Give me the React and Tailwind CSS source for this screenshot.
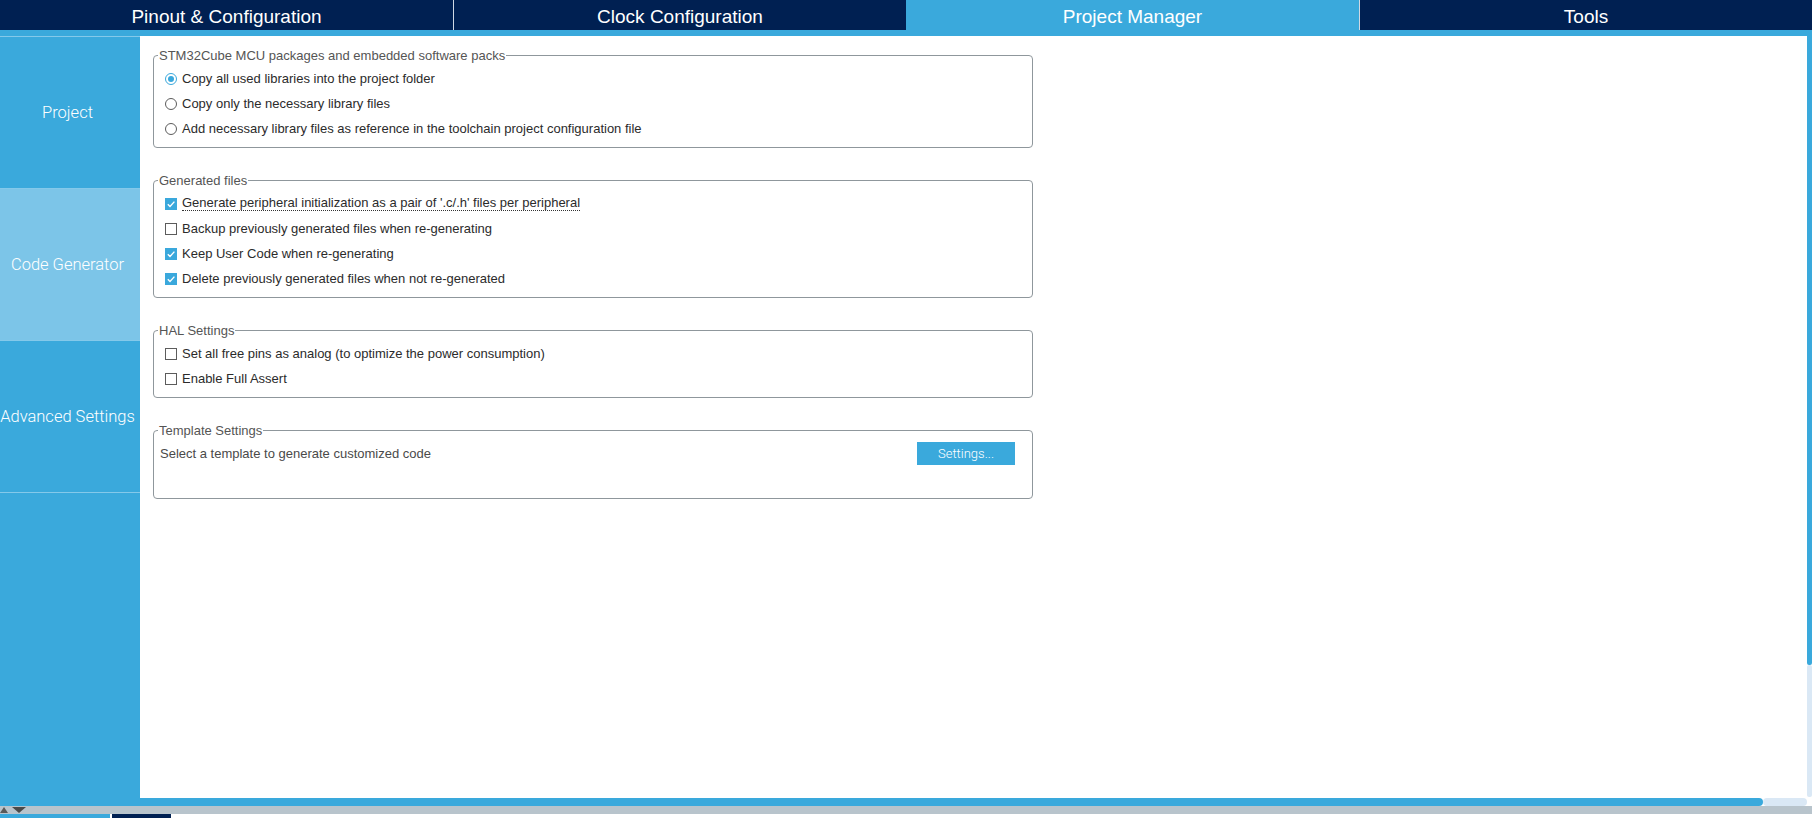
import React from 'react';

// 상단 탭 목록
const tabs = [
  { label: 'Pinout & Configuration', active: false },
  { label: 'Clock Configuration', active: false },
  { label: 'Project Manager', active: true },
  { label: 'Tools', active: false },
];

// 왼쪽 사이드 메뉴
const sideItems = [
  { label: 'Project', active: false },
  { label: 'Code Generator', active: true },
  { label: 'Advanced Settings', active: false },
];

function Radio({ checked }) {
  return (
    <span
      className={`flex h-[12px] w-[12px] shrink-0 items-center justify-center rounded-full border bg-white ${
        checked ? 'border-[#3aa8dc]' : 'border-[#5c5c5c]'
      }`}
    >
      {checked && <span className="h-[6px] w-[6px] rounded-full bg-[#3aa8dc]" />}
    </span>
  );
}

function Checkbox({ checked }) {
  if (checked) {
    return (
      <span className="flex h-[12px] w-[12px] shrink-0 items-center justify-center bg-[#3aa8dc]">
        <svg width="10" height="10" viewBox="0 0 10 10">
          <polyline
            points="1.8,5.2 4,7.4 8.4,2.6"
            fill="none"
            stroke="#fff"
            strokeWidth="1.4"
          />
        </svg>
      </span>
    );
  }
  return <span className="h-[12px] w-[12px] shrink-0 border border-[#5c5c5c] bg-white" />;
}

// 옵션 한 줄 (라디오 / 체크박스)
function OptionRow({ type, checked, focused, children }) {
  return (
    <div className="flex h-[25px] items-center gap-[5px] pl-[11px]">
      {type === 'radio' ? <Radio checked={checked} /> : <Checkbox checked={checked} />}
      <span
        className={`text-[13px] leading-[14px] text-[#2b2b2b] ${
          focused ? 'border-b border-dotted border-[#333]' : ''
        }`}
      >
        {children}
      </span>
    </div>
  );
}

// 그룹 박스
function Group({ title, className = '', children }) {
  return (
    <fieldset
      className={`w-[880px] rounded-[4px] border border-[#8f979c] px-0 pt-[3px] pb-[6px] ${className}`}
    >
      <legend className="ml-[4px] px-[1px] text-[13px] leading-[15px] text-[#555]">
        {title}
      </legend>
      {children}
    </fieldset>
  );
}

export default function App() {
  return (
    <div
      className="flex h-[818px] w-[1812px] flex-col overflow-hidden bg-white"
      style={{ fontFamily: '"Liberation Sans", Arial, sans-serif' }}
    >
      {/* 상단 탭 */}
      <div className="grid h-[30px] grid-cols-4 bg-[#002052]">
        {tabs.map((tab, i) => (
          <div
            key={tab.label}
            className={`flex items-center justify-center pt-[3px] text-[19px] leading-none text-white ${
              tab.active ? 'bg-[#3aa9dc]' : ''
            } ${i === 1 || i === 3 ? 'border-l border-[#cfd8e3]' : ''}`}
          >
            {tab.label}
          </div>
        ))}
      </div>
      <div className="h-[6px] bg-[#3aa9dc]" />

      <div className="flex h-[770px]">
        {/* 사이드 메뉴 */}
        <aside className="flex w-[140px] shrink-0 flex-col border-t border-[#84c9ea] bg-[#3aa9dc]">
          {sideItems.map((item) => (
            <div
              key={item.label}
              className={`flex h-[152px] items-center justify-center border-b border-[#84c9ea] pt-[2px] pr-[5px] text-[16.5px] font-light text-white ${
                item.active ? 'bg-[#7cc5e8]' : ''
              }`}
              style={{ fontFamily: 'Roboto, "Liberation Sans", sans-serif' }}
            >
              <span className="whitespace-nowrap">{item.label}</span>
            </div>
          ))}
        </aside>

        <div className="flex min-w-0 flex-1 flex-col">
          <div className="flex min-h-0 flex-1">
            {/* 본문 */}
            <main className="flex-1 bg-white pt-[12px] pl-[13px]">
              <Group title="STM32Cube MCU packages and embedded software packs">
                <OptionRow type="radio" checked>
                  Copy all used libraries into the project folder
                </OptionRow>
                <OptionRow type="radio">Copy only the necessary library files</OptionRow>
                <OptionRow type="radio">
                  Add necessary library files as reference in the toolchain project configuration file
                </OptionRow>
              </Group>

              <Group title="Generated files" className="mt-[25px]">
                <OptionRow type="checkbox" checked focused>
                  Generate peripheral initialization as a pair of '.c/.h' files per peripheral
                </OptionRow>
                <OptionRow type="checkbox">Backup previously generated files when re-generating</OptionRow>
                <OptionRow type="checkbox" checked>
                  Keep User Code when re-generating
                </OptionRow>
                <OptionRow type="checkbox" checked>
                  Delete previously generated files when not re-generated
                </OptionRow>
              </Group>

              <Group title="HAL Settings" className="mt-[25px]">
                <OptionRow type="checkbox">
                  Set all free pins as analog (to optimize the power consumption)
                </OptionRow>
                <OptionRow type="checkbox">Enable Full Assert</OptionRow>
              </Group>

              <Group title="Template Settings" className="mt-[25px]">
                <div className="flex items-center justify-between pt-[1px] pr-[17px] pb-[27px] pl-[6px]">
                  <span className="text-[13px] text-[#4a4a4a]">
                    Select a template to generate customized code
                  </span>
                  <button
                    className="flex h-[23px] w-[98px] items-center justify-center bg-[#3aa9dc] text-[13px] font-light text-white"
                    style={{ fontFamily: 'Roboto, "Liberation Sans", sans-serif' }}
                  >
                    Settings...
                  </button>
                </div>
              </Group>
            </main>

            {/* 세로 스크롤바 */}
            <div className="flex w-[5px] flex-col bg-white pb-[1px]">
              <div className="h-[629px] rounded-b-[2px] bg-[#3aa9dc]" />
              <div className="flex-1 rounded-[2px] bg-[#dae8f5]" />
            </div>
          </div>

          {/* 가로 스크롤바 */}
          <div className="flex h-[8px] bg-white">
            <div className="w-[1623px] rounded-r-[4px] bg-[#3aa9dc]" />
            <div className="flex-1 rounded-[4px] bg-[#dae8f5]" />
            <div className="w-[5px]" />
          </div>
        </div>
      </div>

      {/* 하단 패널 경계 */}
      <div className="flex h-[8px] items-center gap-[4px] bg-[#b8c4cc]">
        <svg width="8" height="6" viewBox="0 0 8 6">
          <polygon points="0,6 4,0 8,6" fill="#5a5a5a" />
        </svg>
        <svg width="14" height="6" viewBox="0 0 14 6">
          <polygon points="0,0 14,0 7,6" fill="#4a4a4a" />
        </svg>
      </div>
      <div className="flex h-[4px] gap-[2px]">
        <div className="w-[110px] bg-[#3aa9dc]" />
        <div className="w-[59px] bg-[#002052]" />
      </div>
    </div>
  );
}
